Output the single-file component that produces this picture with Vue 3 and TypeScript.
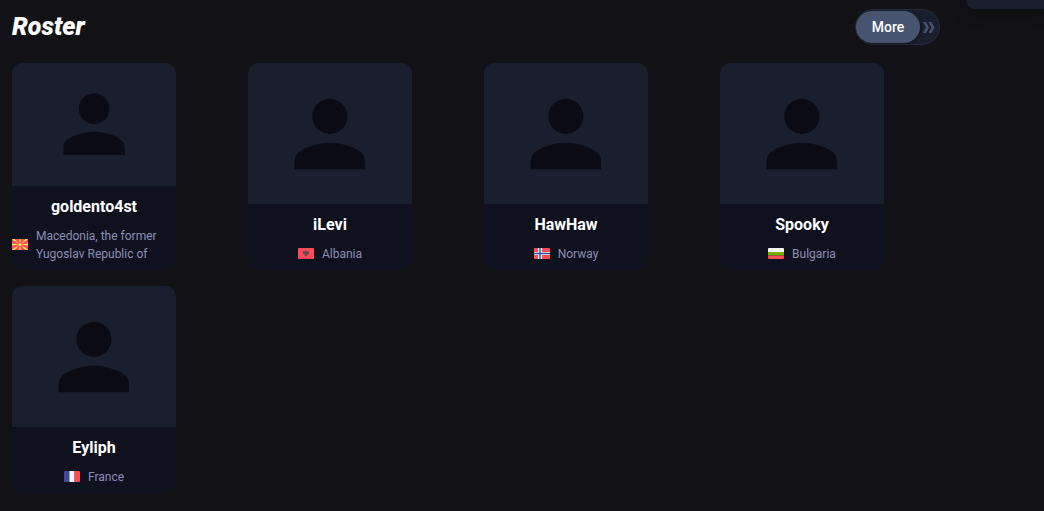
<script setup lang="ts">
type Flag = 'mk' | 'al' | 'no' | 'bg' | 'fr'

interface Player {
  name: string
  country: string
  flag: Flag
}

const players: Player[] = [
  { name: 'goldento4st', country: 'Macedonia, the former Yugoslav Republic of', flag: 'mk' },
  { name: 'iLevi', country: 'Albania', flag: 'al' },
  { name: 'HawHaw', country: 'Norway', flag: 'no' },
  { name: 'Spooky', country: 'Bulgaria', flag: 'bg' },
  { name: 'Eyliph', country: 'France', flag: 'fr' },
]
</script>

<template>
  <div class="page">
    <main class="content">
      <header class="head">
        <h2 class="title">Roster</h2>
        <button type="button" class="more">
          <span class="more-label">More</span>
          <svg class="chevrons" viewBox="0 0 12 12" aria-hidden="true">
            <path d="M0 1h3l3 5.500-3 5.500H0l3-5.500zM5.500 1h3l3 5.500-3 5.500h-3l3-5.500z" />
          </svg>
        </button>
      </header>

      <ul class="roster">
        <li v-for="player in players" :key="player.name" class="card">
          <div class="photo">
            <svg class="person" viewBox="0 0 24 24" aria-hidden="true">
              <path d="M12 12c2.21 0 4-1.79 4-4s-1.79-4-4-4-4 1.79-4 4 1.79 4 4 4zm0 2c-2.67 0-8 1.34-8 4v2h16v-2c0-2.66-5.33-4-8-4z" />
            </svg>
          </div>
          <div class="info">
            <h3 class="name">{{ player.name }}</h3>
            <div class="country">
              <svg class="flag" viewBox="0 0 16 11" aria-hidden="true">
                <template v-if="player.flag === 'mk'">
                  <rect width="16" height="11" fill="#ff4b55" />
                  <path fill="#ffe15a" d="M0 0h2.400L8 5.500 13.600 0H16v.6L8 5.500 16 10.400v.6h-2.400L8 5.500 2.400 11H0v-.6L8 5.500 0 .6zM7 0h2L8 5.500zM7 11h2L8 5.500zM0 4.500v2l8-1zM16 4.500v2l-8-1z" />
                  <circle cx="8" cy="5.500" r="2.100" fill="#ff4b55" />
                  <circle cx="8" cy="5.500" r="1.600" fill="#ffe15a" />
                </template>
                <template v-else-if="player.flag === 'al'">
                  <rect width="16" height="11" fill="#ff4b55" />
                  <path fill="#464655" opacity="0.85" d="M5 3l2 .6.5-1 .5.6.5-.6.5 1 2-.6v2.500L9.700 6.600 9 7.500 8 9 7 7.500l-.7-.9L5 5.500z" />
                </template>
                <template v-else-if="player.flag === 'no'">
                  <rect width="16" height="11" fill="#ff4b55" />
                  <path fill="#f5f5f5" d="M4 0h4v4h8v3H8v4H4V7H0V4h4z" />
                  <path fill="#41479b" d="M5.300 0h1.400v4.800H16v1.400H6.700V11H5.300V6.200H0V4.800h5.300z" />
                </template>
                <template v-else-if="player.flag === 'bg'">
                  <rect width="16" height="4" fill="#f5f5f5" />
                  <rect y="4" width="16" height="3.500" fill="#73af00" />
                  <rect y="7.500" width="16" height="3.500" fill="#ff4b55" />
                </template>
                <template v-else>
                  <rect width="5.400" height="11" fill="#41479b" />
                  <rect x="5.400" width="5.200" height="11" fill="#f5f5f5" />
                  <rect x="10.600" width="5.400" height="11" fill="#ff4b55" />
                </template>
              </svg>
              <span>{{ player.country }}</span>
            </div>
          </div>
        </li>
      </ul>
    </main>
    <aside class="side"></aside>
  </div>
</template>

<style>
body {
  margin: 0;
  background: #121216;
}
</style>

<style scoped>
.page {
  display: flex;
  align-items: flex-start;
  gap: 10px;
  min-height: 100vh;
  font-family: Roboto, "Liberation Sans", sans-serif;
  color: #fff;
}

.content {
  flex: 1;
  min-width: 0;
  padding: 9px 0 16px 12px;
}

.side {
  width: 78px;
  height: 9px;
  border-bottom-left-radius: 16px;
  background: #191f2c;
  box-shadow: 0 4px 16px rgba(0, 0, 0, 0.3);
}

.head {
  display: flex;
  align-items: center;
  justify-content: space-between;
  padding-right: 16px;
  margin-bottom: 18px;
}

.title {
  margin: 0;
  font-size: 25px;
  line-height: 36px;
  font-weight: 900;
  font-style: italic;
}

.more {
  display: flex;
  align-items: center;
  gap: 3px;
  box-sizing: border-box;
  height: 36px;
  padding: 0 4px 0 0;
  border: 1px solid #262c39;
  border-radius: 18px;
  background: #191f2d;
  color: #fff;
  font: 500 14px/32px Roboto, "Liberation Sans", sans-serif;
  cursor: pointer;
}

.more-label {
  width: 64px;
  border-radius: 16px;
  background: #48546f;
  box-shadow: 1px 1px 3px rgba(0, 0, 0, 0.4);
  text-align: center;
}

.chevrons {
  width: 12px;
  height: 12px;
  fill: #48546f;
}

.roster {
  display: grid;
  grid-template-columns: repeat(4, 1fr);
  row-gap: 16px;
  margin: 0;
  padding: 0;
  list-style: none;
}

.card {
  display: flex;
  flex-direction: column;
  width: 164px;
  height: 207px;
  overflow: hidden;
  border-radius: 10px;
  background: #10111f;
}

.photo {
  display: flex;
  flex: 1;
  min-height: 0;
  align-items: center;
  justify-content: center;
  background: #191f2c;
}

.person {
  height: 75%;
  fill: #0b0b16;
}

.info {
  padding: 9px 0 7px;
  margin-top: 0;
}

.name {
  margin: 0 0 8px;
  font-size: 16px;
  line-height: 24px;
  font-weight: 700;
  text-align: center;
}

.country {
  display: flex;
  align-items: center;
  justify-content: center;
  gap: 8px;
  color: #8b8fb5;
  font-size: 12px;
  line-height: 18px;
}

.flag {
  flex: none;
  width: 16px;
  height: 11px;
  margin-bottom: 2px;
  border-radius: 1px;
}
</style>
